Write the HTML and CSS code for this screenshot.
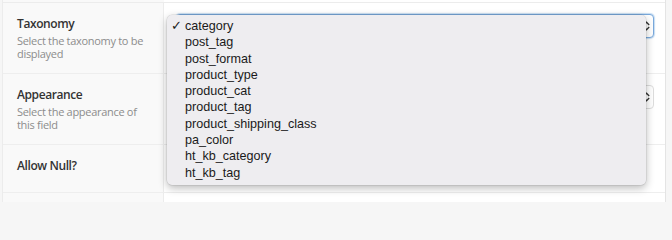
FILE: index.html
```html
<!DOCTYPE html>
<html>
<head>
<meta charset="utf-8">
<link rel="stylesheet" href="styles.css">
</head>
<body>
<div class="table">
  <div class="prev"></div>
  <div class="row">
    <div class="label">
      <div class="title">Taxonomy</div>
      <div class="desc">Select the taxonomy to be displayed</div>
    </div>
    <div class="field">
      <div class="select focus"><span class="arrows"><svg width="7" height="10" viewBox="0 0 7 10"><path d="M0.8 4 L3.5 1.2 L6.2 4" fill="none" stroke="#333" stroke-width="1.3"/><path d="M0.8 6 L3.5 8.8 L6.2 6" fill="none" stroke="#333" stroke-width="1.3"/></svg></span></div>
    </div>
  </div>
  <div class="row">
    <div class="label">
      <div class="title">Appearance</div>
      <div class="desc">Select the appearance of this field</div>
    </div>
    <div class="field">
      <div class="select"><span class="arrows"><svg width="7" height="10" viewBox="0 0 7 10"><path d="M0.8 4 L3.5 1.2 L6.2 4" fill="none" stroke="#333" stroke-width="1.3"/><path d="M0.8 6 L3.5 8.8 L6.2 6" fill="none" stroke="#333" stroke-width="1.3"/></svg></span></div>
    </div>
  </div>
  <div class="row last">
    <div class="label">
      <div class="title">Allow Null?</div>
    </div>
    <div class="field"></div>
  </div>
  <div class="row next">
    <div class="label"></div>
    <div class="field"></div>
  </div>
</div>
<ul class="menu">
  <li class="checked">category</li>
  <li>post_tag</li>
  <li>post_format</li>
  <li>product_type</li>
  <li>product_cat</li>
  <li>product_tag</li>
  <li>product_shipping_class</li>
  <li>pa_color</li>
  <li>ht_kb_category</li>
  <li>ht_kb_tag</li>
</ul>
</body>
</html>
```
FILE: styles.css
```css
html, body {
  margin: 0;
  padding: 0;
  height: 202px;
  overflow: hidden;
  background: #f6f6f6;
}
.table {
  margin-left: 2px;
  width: 662px;
  border-left: 1px solid #ececec;
  border-right: 1px solid #e4e4e4;
  background: #fff;
  font-family: "Open Sans", sans-serif;
}
.prev {
  height: 2px;
  border-bottom: 1px solid #ececec;
  background: linear-gradient(to right, #f9f9f9 161px, #fff 161px);
}
.row {
  display: grid;
  grid-template-columns: 161px 1fr;
  border-bottom: 1px solid #eeeeee;
}
.label {
  background: #f9f9f9;
  border-right: 1px solid #ececec;
  padding: 11px 10px 13px 14px;
}
.row.last .label {
  padding-bottom: 16px;
}
.row.next .label {
  height: 10px;
}
.title {
  font-size: 12px;
  font-weight: 600;
  line-height: 20px;
  letter-spacing: -0.4px;
  color: #333;
}
.desc {
  font-size: 11px;
  line-height: 13px;
  letter-spacing: -0.3px;
  color: #8c8c8c;
}
.field {
  padding: 11px 11px 0 12px;
}
.select {
  height: 22px;
  border: 1px solid #dddddd;
  border-radius: 4px;
  background: #fff;
  display: flex;
  justify-content: flex-end;
  align-items: center;
  padding-right: 3px;
}
.select.focus {
  border-color: #7aa9dc;
  box-shadow: 0 0 1px 1px rgba(91, 157, 217, 0.35);
}
.arrows {
  display: flex;
}
.menu {
  position: absolute;
  left: 167px;
  top: 15px;
  width: 479px;
  height: 170px;
  box-sizing: border-box;
  margin: 0;
  padding: 3px 0 4px 0;
  list-style: none;
  background: #eeedf0;
  border-radius: 5px;
  box-shadow: 0 3px 9px rgba(0, 0, 0, 0.28), 0 0 0 0.5px rgba(0, 0, 0, 0.12);
  font-family: "Liberation Sans", Arial, sans-serif;
  font-size: 12.6px;
  color: #1a1a1a;
}
.menu li {
  height: 16.3px;
  line-height: 16.3px;
  padding-left: 18px;
  position: relative;
}
.menu li.checked::before {
  content: "\2713";
  position: absolute;
  left: 4px;
  top: 0;
  font-family: "DejaVu Sans", sans-serif;
  font-size: 13px;
  font-weight: bold;
}
```
